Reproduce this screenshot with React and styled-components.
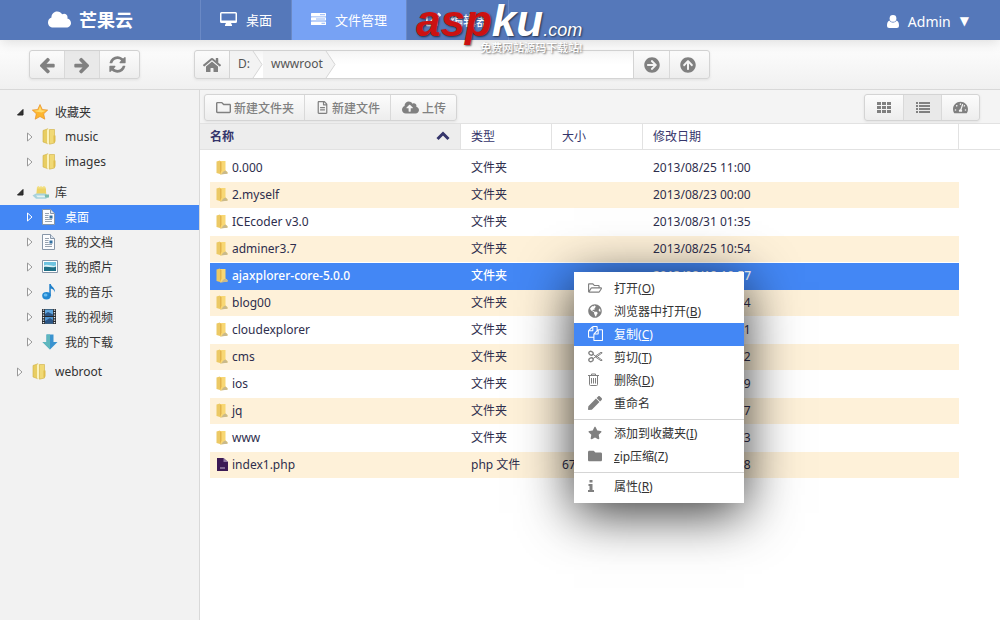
import React from "react";
import styled, { createGlobalStyle, css } from "styled-components";
import {
  FaArrowCircleRight,
  FaArrowCircleUp,
  FaCloud,
  FaCloudUploadAlt,
  FaEdit,
  FaFolder,
  FaGlobeAmericas,
  FaHome,
  FaPen,
  FaRegFileAlt,
  FaRegFolder,
  FaRegFolderOpen,
  FaStar,
  FaTachometerAlt,
} from "react-icons/fa";

const files = [
  { name: "0.000", date: "2013/08/25 11:00" },
  { name: "2.myself", date: "2013/08/23 00:00" },
  { name: "ICEcoder v3.0", date: "2013/08/31 01:35" },
  { name: "adminer3.7", date: "2013/08/25 10:54" },
  { name: "ajaxplorer-core-5.0.0", date: "2013/08/19 10:57", selected: true },
  { name: "blog00", date: "2013/08/25 11:14" },
  { name: "cloudexplorer", date: "2013/08/30 22:41" },
  { name: "cms", date: "2013/08/25 11:12" },
  { name: "ios", date: "2013/08/24 09:49" },
  { name: "jq", date: "2013/08/25 11:17" },
  { name: "www", date: "2013/08/25 11:13" },
  { name: "index1.php", type: "php 文件", size: "67B", date: "2013/08/27 20:48" },
];

const tree = [
  {
    label: "收藏夹",
    icon: "star",
    children: [
      { label: "music", icon: "folder" },
      { label: "images", icon: "folder" },
    ],
  },
  {
    label: "库",
    icon: "library",
    children: [
      { label: "桌面", icon: "doc", selected: true },
      { label: "我的文档", icon: "doc" },
      { label: "我的照片", icon: "photo" },
      { label: "我的音乐", icon: "note" },
      { label: "我的视频", icon: "film" },
      { label: "我的下载", icon: "download" },
    ],
  },
  { label: "webroot", icon: "folder" },
];

const DesktopIcon = () => (
  <svg width="17" height="14" viewBox="0 0 17 14" fill="currentColor">
    <path
      fillRule="evenodd"
      d="M1.5 0h14A1.5 1.5 0 0 1 17 1.5v8a1.5 1.5 0 0 1-1.5 1.5H11l1 2v1H5v-1l1-2H1.5A1.5 1.5 0 0 1 0 9.500v-8A1.500 1.500 0 0 1 1.500 0ZM1.500 1.500v7h14v-7Z"
    />
  </svg>
);

const TasksIcon = () => (
  <svg width="15" height="12" viewBox="0 0 15 12">
    <g fill="#fff">
      <rect width="15" height="3.400" rx="0.500" />
      <rect y="4.200" width="15" height="3.400" rx="0.500" />
      <rect y="8.500" width="15" height="3.400" rx="0.500" />
    </g>
    <path d="M9 1.700h5M5 6h9M10.500 10.300H14" stroke="#77a2f4" strokeWidth=".8" />
  </svg>
);

const UserIcon = () => (
  <svg width="12" height="13" viewBox="0 0 12 13" fill="currentColor">
    <circle cx="6" cy="3.400" r="3.400" />
    <path d="M2.400 5.500C.8 6.200 0 8 0 10.500 0 12.200.8 13 2.200 13h7.600c1.400 0 2.200-.8 2.200-2.500 0-2.500-.8-4.300-2.400-5C8.700 6.900 7.400 7.600 6 7.600s-2.700-.7-3.600-2.100Z" />
  </svg>
);

const ArrowIcon = ({ right }) => (
  <svg width="18" height="18" viewBox="0 0 1664 1792" fill="currentColor">
    <path
      transform={right ? "matrix(-1 0 0 1 1664 0)" : undefined}
      d="M1600 896v128q0 53-32.500 90.500t-84.500 37.500h-704l293 294q38 36 38 90t-38 90l-75 76q-37 37-90 37-52 0-91-37l-651-652q-37-37-37-90 0-52 37-91l651-650q38-38 91-38 52 0 90 38l75 74q38 38 38 91t-38 91l-293 293h704q52 0 84.500 37.500t32.500 90.500z"
    />
  </svg>
);

const RefreshIcon = () => (
  <svg width="19" height="19" viewBox="0 0 1536 1792" fill="currentColor">
    <path d="M1511 1056q0 5-1 7-64 268-268 434.500t-478 166.500q-146 0-282.500-55t-243.500-157l-129 129q-19 19-45 19t-45-19-19-45v-448q0-26 19-45t45-19h448q26 0 45 19t19 45-19 45l-137 137q71 66 161 102t187 36q134 0 250-65t186-179q11-17 53-117 8-23 30-23h192q13 0 22.500 9.500t9.500 22.500zm25-800v448q0 26-19 45t-45 19h-448q-26 0-45-19t-19-45 19-45l138-138q-148-137-349-137-134 0-250 65t-186 179q-11 17-53 117-8 23-30 23h-199q-13 0-22.500-9.500t-9.500-22.500v-7q65-268 270-434.500t480-166.500q146 0 284 55.500t245 156.500l130-129q19-19 45-19t45 19 19 45z" />
  </svg>
);

const CopyIcon = () => (
  <svg width="15" height="15" viewBox="0 0 1792 1792" fill="currentColor">
    <path d="M1696 384q40 0 68 28t28 68v1216q0 40-28 68t-68 28h-960q-40 0-68-28t-28-68v-288h-544q-40 0-68-28t-28-68v-672q0-40 20-88t48-76l408-408q28-28 76-48t88-20h416q40 0 68 28t28 68v328q68-40 128-40h416zm-544 213l-299 299h299v-299zm-640-384l-299 299h299v-299zm196 647l316-316v-416h-384v416q0 40-28 68t-68 28h-416v640h512v-256q0-40 20-88t48-76zm956 804v-1152h-384v416q0 40-28 68t-68 28h-416v640h896z" />
  </svg>
);

const CutIcon = () => (
  <svg width="15" height="13" viewBox="0 0 15 13" fill="none" stroke="currentColor">
    <ellipse cx="3" cy="3.200" rx="2.200" ry="1.800" strokeWidth="1.400" transform="rotate(25 3 3.200)" />
    <ellipse cx="3" cy="9.800" rx="2.200" ry="1.800" strokeWidth="1.400" transform="rotate(-25 3 9.800)" />
    <path d="M5 4.300 8 6.500 5 8.700M7.500 6 13 2.300l1.200.5L8.500 7ZM7.500 7l5.500 3.700 1.200-.5L8.500 6Z" strokeWidth="1" />
  </svg>
);

const TrashIcon = () => (
  <svg width="11" height="13" viewBox="0 0 11 13" fill="none" stroke="currentColor">
    <path d="M0 2.500h11M3.500 2.500v-1.500h4v1.500M1.500 3v8.500a1 1 0 0 0 1 1h6a1 1 0 0 0 1-1V3M3.500 5v5.500M5.500 5v5.500M7.500 5v5.500" />
  </svg>
);

const InfoIcon = () => (
  <svg width="6" height="12" viewBox="0 0 6 12" fill="currentColor">
    <path d="M1.500 0h3v2.500h-3ZM.5 4h4v6H6v2H0v-2h1.500V6H.5Z" />
  </svg>
);

const GridIcon = () => (
  <svg width="14" height="11" viewBox="0 0 14 11" fill="currentColor">
    {[0, 4, 8].map((y) => (
      <path key={y} d={`M0 ${y}h4v3H0ZM5 ${y}h4v3H5ZM10 ${y}h4v3h-4Z`} />
    ))}
  </svg>
);

const ListIcon = () => (
  <svg width="14" height="11" viewBox="0 0 14 11" fill="currentColor">
    {[0, 3, 6, 9].map((y) => (
      <path key={y} d={`M0 ${y}h2v2H0ZM3 ${y}h11v2H3Z`} />
    ))}
  </svg>
);

const SortIcon = () => (
  <svg width="14" height="10" viewBox="0 0 14 10" fill="none" stroke="currentColor" strokeWidth="3">
    <path d="m1.500 8 5.500-5.500L12.500 8" />
  </svg>
);

const FolderIcon = () => (
  <svg width="16" height="17" viewBox="0 0 16 17">
    <path d="M1 2.500 6 .8v15L1 14Z" fill="#e8cd62" stroke="#cfae42" strokeWidth=".6" />
    <path d="M5 1.500 7.500.7v15.500L5 15.400Z" fill="#fbf3bd" />
    <path d="M7.500 1.500h5v13.500l-5 1.200Z" fill="#f1d975" stroke="#cfae42" strokeWidth=".6" />
    <path d="M11.500 7.500h2v6l-2 1Z" fill="#dfbd4c" />
  </svg>
);

const FileFolderIcon = () => (
  <svg width="12" height="15" viewBox="0 0 12 15">
    <path d="M.5 1.500 4 .5v13.500l-3.500-1Z" fill="#ecc965" />
    <path d="M4 1h5.500v9.500l2 1.500v1.500L4 14.500Z" fill="#f8d774" />
    <path d="M4 1 5.500 2.500v8L4 14.500Z" fill="#e3b44b" />
    <path d="M6 13.500c1-2 2-2.500 3.500-3l2 2v1.200L4 14.600Z" fill="#c9b98c" />
  </svg>
);

const PhpIcon = () => (
  <svg width="12" height="13" viewBox="0 0 12 13">
    <path d="M1 0h6.500L12 4v9H1Z" fill="#3b1a55" />
    <path d="M7.500 0v4H12Z" fill="#8f78a3" />
    <path d="M4 10h5" stroke="#c3b4cf" />
  </svg>
);

const StarIcon = () => (
  <svg width="16" height="16" viewBox="0 0 16 16">
    <path
      d="m8 .5 2.300 5 5.400.6-4 3.700 1.100 5.400L8 12.500l-4.800 2.700 1.100-5.400-4-3.700 5.400-.6Z"
      fill="#fdb62f"
      stroke="#e8902a"
      strokeWidth=".7"
    />
    <path d="m8 2.200 1.600 4 4.400.6-4.500 1.700L4 7.500 2 6.800l4.400-.6Z" fill="#ffdc6e" />
  </svg>
);

const LibraryIcon = () => (
  <svg width="18" height="16" viewBox="0 0 18 16">
    <path d="M5 3 6.500 2l1.300 1L9 2l1.300 1 1.700-1 1.500 1 1 8.500H4Z" fill="#f2df83" />
    <path d="M5 4.500h9v5H5Z" fill="#edd365" />
    <path d="M.5 11.500 4 9.500h9l4 3-3 2.300H4Z" fill="#a9d3dc" />
    <path d="M4 11.500h8l2 1.800H5.500Z" fill="#e3f3f2" />
    <path d="M13 10.500h4v3h-4Z" fill="#7bbcae" />
  </svg>
);

const DocIcon = () => (
  <svg width="13" height="16" viewBox="0 0 13 16">
    <path d="M.5.5h8l4 4v11H.5Z" fill="#fbfcfe" stroke="#8796a8" />
    <path d="M8.500.5v4h4" fill="#dbe4ef" stroke="#8796a8" />
    <path d="M3 4.500h4M3 6.500h3.500M3 8.500h3.500M3 10.500h7M3 12.500h7" stroke="#7f8c9c" strokeWidth=".8" />
    <path d="M7.500 6.500h3v3h-3Z" fill="#316fa0" />
  </svg>
);

const PhotoIcon = () => (
  <svg width="16" height="13" viewBox="0 0 16 13">
    <path d="M.5.5h15v12H.5Z" fill="#fff" stroke="#8796a8" />
    <path d="M2 2h12v9H2Z" fill="#6ec3e0" />
    <path d="M2 5.500c4-2 7 1.500 12 0V8H2Z" fill="#d9f1f6" />
    <path d="M2 7c4-.8 8 1.500 12-.5V11H2Z" fill="#1e6f86" />
  </svg>
);

const NoteIcon = () => (
  <svg width="14" height="16" viewBox="0 0 14 16">
    <ellipse cx="4.500" cy="11.800" rx="4.300" ry="3.700" fill="#2288d2" />
    <ellipse cx="3.600" cy="10.900" rx="1.900" ry="1.500" fill="#69bdf0" />
    <path d="M7.300 0h1.500c.5 3 4.800 3.500 4 8.500-.4-2.500-2-3.600-4-4v7.500H7.300Z" fill="#1f7fc9" />
  </svg>
);

const FilmIcon = () => (
  <svg width="14" height="15" viewBox="0 0 14 15">
    <path d="M0 0h14v15H0Z" fill="#25292e" />
    <path d="M3 .5h8v6.500H3Z" fill="#5fa6df" />
    <path d="M3 8h8v6.500H3Z" fill="#5297d2" />
    <path d="m3 5 3-2 5 2.500V7H3ZM3 12l5-3 3 2v3H3Z" fill="#2c5686" />
    <path d="M1.500.5v14M12.500.5v14" stroke="#e8edf2" strokeWidth="1.400" strokeDasharray="1.300 1.200" />
  </svg>
);

const DownloadIcon = () => (
  <svg width="16" height="16" viewBox="0 0 16 16">
    <path d="M4.500.5h7V8h4L8 15.500.5 8h4Z" fill="#3a93cf" />
    <path d="M4.500.5H8v15L.5 8h4Z" fill="#5fb7bd" />
  </svg>
);

const treeIcons = {
  star: StarIcon,
  folder: FolderIcon,
  library: LibraryIcon,
  doc: DocIcon,
  photo: PhotoIcon,
  note: NoteIcon,
  film: FilmIcon,
  download: DownloadIcon,
};

const menu = [
  [
    { label: "打开", hotkey: "O", icon: FaRegFolderOpen },
    { label: "浏览器中打开", hotkey: "B", icon: FaGlobeAmericas },
    { label: "复制", hotkey: "C", icon: CopyIcon, active: true },
    { label: "剪切", hotkey: "T", icon: CutIcon },
    { label: "删除", hotkey: "D", icon: TrashIcon },
    { label: "重命名", icon: FaPen },
  ],
  [
    { label: "添加到收藏夹", hotkey: "I", icon: FaStar },
    { label: "zip压缩", hotkey: "Z", icon: FaFolder, zip: true },
  ],
  [{ label: "属性", hotkey: "R", icon: InfoIcon }],
];

const TreeArrow = ({ open, selected }) => (
  <svg width="8" height="10" viewBox="0 0 8 10">
    {open ? (
      <path d="M7 2.500v5.500H1.500Z" fill="#333" stroke="#222" />
    ) : (
      <path d="M1.500 1 6 5 1.500 9Z" fill={selected ? "none" : "#fff"} stroke={selected ? "#fff" : "#999"} />
    )}
  </svg>
);

const Crumb = ({ children }) => (
  <CrumbItem>
    <CrumbLink href="#">{children}</CrumbLink>
    <svg width="11" height="27" viewBox="0 0 11 27" fill="#f3f3f3" stroke="#d6d6d6">
      <path d="M0 0h1l9 13.500L1 27H0" stroke="none" />
      <path d="m1 0 9 13.500L1 27" fill="none" />
    </svg>
  </CrumbItem>
);

const TreeNode = ({ node, level }) => {
  const Icon = treeIcons[node.icon];

  return (
    <li>
      <TreeRow href="#" $level={level} $selected={node.selected}>
        <TreeArrow open={Boolean(node.children)} selected={node.selected} />
        <TreeIcon>
          <Icon />
        </TreeIcon>
        {node.label}
      </TreeRow>
      {node.children && (
        <TreeList>
          {node.children.map((child) => (
            <TreeNode key={child.label} node={child} level={level + 1} />
          ))}
        </TreeList>
      )}
    </li>
  );
};

const MenuLabel = ({ item }) => {
  if (item.zip) {
    return (
      <span>
        <u>z</u>ip压缩(Z)
      </span>
    );
  }
  return (
    <span>
      {item.label}
      {item.hotkey && (
        <>
          (<u>{item.hotkey}</u>)
        </>
      )}
    </span>
  );
};

const App = () => {
  return (
    <Page>
      <GlobalStyle />
      <TopBar>
        <Brand href="#">
          <FaCloud size={23} />
          芒果云
        </Brand>
        <Nav>
          <NavLink href="#">
            <DesktopIcon />
            桌面
          </NavLink>
          <NavLink href="#" $active>
            <TasksIcon />
            文件管理
          </NavLink>
          <NavLink href="#">
            <FaEdit size={15} />
            编辑器
          </NavLink>
        </Nav>
        <UserButton>
          <UserIcon />
          Admin
          <Caret>▼</Caret>
        </UserButton>
      </TopBar>

      <AddressBar>
        <History>
          <ButtonGroup>
            <BarButton aria-label="后退">
              <ArrowIcon />
            </BarButton>
            <BarButton aria-label="前进" $pressed>
              <ArrowIcon right />
            </BarButton>
            <BarButton aria-label="刷新" $wide>
              <RefreshIcon />
            </BarButton>
          </ButtonGroup>
        </History>
        <ButtonGroup>
          <BarButton aria-label="主页">
            <FaHome size={18} />
          </BarButton>
          <Path>
            <Crumb>D:</Crumb>
            <Crumb>wwwroot</Crumb>
          </Path>
          <BarButton aria-label="转到">
            <FaArrowCircleRight size={16} />
          </BarButton>
          <BarButton aria-label="上级目录" $wide>
            <FaArrowCircleUp size={16} />
          </BarButton>
        </ButtonGroup>
      </AddressBar>

      <Body>
        <Sidebar>
          <TreeList $root>
            {tree.map((node) => (
              <TreeNode key={node.label} node={node} level={0} />
            ))}
          </TreeList>
        </Sidebar>

        <Main>
          <Tools>
            <ButtonGroup>
              <ToolButton>
                <FaRegFolder size={15} />
                新建文件夹
              </ToolButton>
              <ToolButton>
                <FaRegFileAlt size={13} />
                新建文件
              </ToolButton>
              <ToolButton>
                <FaCloudUploadAlt size={17} />
                上传
              </ToolButton>
            </ButtonGroup>
            <ButtonGroup>
              <ViewButton aria-label="图标">
                <GridIcon />
              </ViewButton>
              <ViewButton aria-label="列表" $pressed>
                <ListIcon />
              </ViewButton>
              <ViewButton aria-label="仪表盘">
                <FaTachometerAlt size={15} />
              </ViewButton>
            </ButtonGroup>
          </Tools>

          <FileTable>
            <colgroup>
              <col width="261" />
              <col width="91" />
              <col width="91" />
              <col />
              <col width="41" />
            </colgroup>
            <thead>
              <tr>
                <HeadCell $sorted>
                  <SortLabel>
                    名称
                    <SortIcon />
                  </SortLabel>
                </HeadCell>
                <HeadCell>类型</HeadCell>
                <HeadCell>大小</HeadCell>
                <HeadCell>修改日期</HeadCell>
                <HeadEnd />
              </tr>
            </thead>
            <tbody>
              {files.map((file) => (
                <FileRow key={file.name} $selected={file.selected}>
                  <td>
                    <FileName>
                      {file.type ? <PhpIcon /> : <FileFolderIcon />}
                      {file.name}
                    </FileName>
                  </td>
                  <td>{file.type || "文件夹"}</td>
                  <td>{file.size}</td>
                  <td>{file.date}</td>
                </FileRow>
              ))}
            </tbody>
          </FileTable>
        </Main>
      </Body>

      <ContextMenu>
        {menu.map((group, i) => (
          <MenuGroup key={i}>
            {group.map((item) => (
              <MenuItem key={item.label} $active={item.active}>
                <MenuIcon>
                  <item.icon size={14} />
                </MenuIcon>
                <MenuLabel item={item} />
              </MenuItem>
            ))}
          </MenuGroup>
        ))}
      </ContextMenu>

      <Watermark>
        <WatermarkName>
          <WatermarkRed>asp</WatermarkRed>ku<WatermarkDomain>.com</WatermarkDomain>
        </WatermarkName>
        <WatermarkNote>免费网站源码下载站!</WatermarkNote>
      </Watermark>
    </Page>
  );
};

export default App;

const GlobalStyle = createGlobalStyle`
  * {
    box-sizing: border-box;
  }
  body {
    margin: 0;
    font-family: "Noto Sans", "Noto Sans CJK SC", sans-serif;
    font-size: 12px;
    color: #333;
  }
  button {
    font: inherit;
    color: inherit;
    border: 0;
    padding: 0;
    background: none;
    cursor: pointer;
  }
  a {
    color: inherit;
    text-decoration: none;
  }
  svg {
    flex-shrink: 0;
  }
`;

const Page = styled.div`
  position: relative;
  display: flex;
  flex-direction: column;
  min-height: 100vh;
  background: #fff;
`;

const TopBar = styled.header`
  position: relative;
  z-index: 1;
  display: flex;
  height: 40px;
  background: #5578ba;
  color: #fff;
  box-shadow: 0 2px 12px rgba(0, 0, 0, 0.15);
`;

const Brand = styled.a`
  display: flex;
  align-items: center;
  gap: 8px;
  width: 200px;
  padding: 0 0 2px 48px;
  font-size: 18px;
  font-weight: 700;
`;

const Nav = styled.nav`
  display: flex;
  flex: 1;
`;

const NavLink = styled.a`
  display: flex;
  align-items: center;
  gap: 9px;
  padding: 0 19px 2px;
  border-left: 1px solid #6a89c5;
  font-size: 13px;
  background: ${({ $active }) => ($active ? "#77a2f4" : "none")};
  &:last-child {
    border-right: 1px solid #6a89c5;
  }
`;

const UserButton = styled.button`
  display: flex;
  align-items: center;
  gap: 9px;
  padding: 2px 31px 0 0;
  font-size: 14px;
`;

const Caret = styled.span`
  font-family: "DejaVu Sans", sans-serif;
  font-size: 12px;
`;

const AddressBar = styled.div`
  display: flex;
  height: 50px;
  padding-top: 10px;
  border-bottom: 1px solid #d8d8d8;
  background: linear-gradient(#fff, #f0f0f0);
`;

const History = styled.div`
  width: 194px;
  padding-left: 29px;
`;

const ButtonGroup = styled.div`
  display: flex;
  align-self: flex-start;
  width: max-content;
  border: 1px solid #d4d4d4;
  border-radius: 3px;
  background: linear-gradient(#fcfcfc, #ededed);
  box-shadow: 0 1px 3px rgba(0, 0, 0, 0.08);
`;

const groupButton = css`
  display: flex;
  align-items: center;
  justify-content: center;
  color: #808080;
  background: ${({ $pressed }) => ($pressed ? "#e9e9e9" : "none")};
  & + & {
    border-left: 1px solid #d9d9d9;
  }
`;

const BarButton = styled.button`
  ${groupButton}
  width: ${({ $wide }) => ($wide ? "40px" : "35px")};
  height: 27px;
  padding-right: ${({ $wide }) => ($wide ? "4px" : "0")};
  &:first-child {
    width: 34px;
  }
`;

const ToolButton = styled.button`
  ${groupButton}
  gap: 3px;
  height: 25px;
  padding: 0 10px 0 11px;
  font-weight: 500;
`;

const ViewButton = styled.button`
  ${groupButton}
  width: 38px;
  height: 25px;
`;

const Path = styled.div`
  display: flex;
  width: 405px;
  border: solid #d4d4d4;
  border-width: 0 1px;
  background: linear-gradient(#f6f6f6, #fff 50%);
`;

const CrumbItem = styled.span`
  display: flex;
`;

const CrumbLink = styled.a`
  padding: 0 2px 0 8px;
  background: #f3f3f3;
  line-height: 25px;
  color: #555;
`;

const Body = styled.div`
  display: flex;
  flex: 1;
`;

const Sidebar = styled.aside`
  width: 200px;
  padding-top: 10px;
  border-right: 1px solid #d9d9d9;
  background: #f2f2f2;
`;

const TreeList = styled.ul`
  display: grid;
  gap: ${({ $root }) => ($root ? "5px" : "0")};
  margin: 0;
  padding: 0;
  list-style: none;
`;

const TreeRow = styled.a`
  display: flex;
  align-items: center;
  height: 25px;
  padding: 0 0 2px ${({ $level }) => 16 + $level * 10}px;
  background: ${({ $selected }) => ($selected ? "#4387f5" : "none")};
  color: ${({ $selected }) => ($selected ? "#fff" : "#333")};
`;

const TreeIcon = styled.span`
  display: flex;
  align-items: center;
  width: 23px;
  margin-left: 8px;
`;

const Main = styled.main`
  flex: 1;
`;

const Tools = styled.div`
  display: flex;
  justify-content: space-between;
  height: 33px;
  padding: 4px 20px 0 4px;
  background: #f4f4f4;
`;

const FileTable = styled.table`
  width: 100%;
  table-layout: fixed;
  border-spacing: 0;
  color: #2e2e4d;

  tbody::before {
    content: "";
    display: table-row;
    height: 5px;
  }
`;

const HeadCell = styled.th`
  height: 27px;
  padding: 0 10px 2px;
  border: solid #e2e2e2;
  border-width: 1px 1px 1px 0;
  background: ${({ $sorted }) => ($sorted ? "#ededed" : "#fff")};
  color: #35356b;
  font-weight: ${({ $sorted }) => ($sorted ? 700 : 400)};
  text-align: left;
`;

const HeadEnd = styled.td`
  border: solid #e2e2e2;
  border-width: 1px 0;
`;

const SortLabel = styled.span`
  display: flex;
  align-items: center;
  justify-content: space-between;
`;

const FileRow = styled.tr`
  td {
    height: 27px;
    padding: 0 0 2px 10px;
    border-bottom: 1px solid transparent;
    background-clip: padding-box;
  }
  td:first-child {
    padding-left: 6px;
    border-left: 10px solid transparent;
  }
  &:nth-child(even) td {
    background-color: #fef1d9;
  }
  ${({ $selected }) =>
    $selected &&
    css`
      && td {
        padding-bottom: 3px;
        border-bottom: 0;
        background-color: #4387f5;
        color: #fff;
        font-weight: 500;
      }
    `}
`;

const FileName = styled.span`
  display: flex;
  align-items: center;
  gap: 4px;
`;

const ContextMenu = styled.div`
  position: absolute;
  top: 272px;
  left: 574px;
  width: 170px;
  padding: 5px 0;
  background: #fff;
  box-shadow: 0 10px 50px rgba(0, 0, 0, 0.8);
`;

const MenuGroup = styled.div`
  & + & {
    margin-top: 4px;
    padding-top: 2px;
    border-top: 1px solid #d5d5d5;
  }
`;

const MenuItem = styled.button`
  display: flex;
  align-items: center;
  width: 100%;
  height: 23px;
  padding: 0 0 2px 14px;
  background: ${({ $active }) => ($active ? "#4387f5" : "none")};
  color: ${({ $active }) => ($active ? "#fff" : "#333")};
  svg {
    color: ${({ $active }) => ($active ? "#fff" : "#808080")};
  }
`;

const MenuIcon = styled.span`
  display: flex;
  width: 26px;
`;

const Watermark = styled.div`
  position: absolute;
  top: 0;
  left: 416px;
  z-index: 2;
  text-align: right;
  text-shadow: 1px 1px 2px rgba(0, 0, 0, 0.6);
  color: #fff;
`;

const WatermarkName = styled.div`
  font-family: "Liberation Sans", sans-serif;
  font-size: 44px;
  font-weight: 700;
  font-style: italic;
  line-height: 42px;
  white-space: nowrap;
`;

const WatermarkRed = styled.span`
  color: #cc1111;
`;

const WatermarkDomain = styled.span`
  font-size: 18px;
  font-weight: 400;
  line-height: 18px;
`;

const WatermarkNote = styled.div`
  font-size: 11px;
  font-weight: 500;
  line-height: 12px;
`;
